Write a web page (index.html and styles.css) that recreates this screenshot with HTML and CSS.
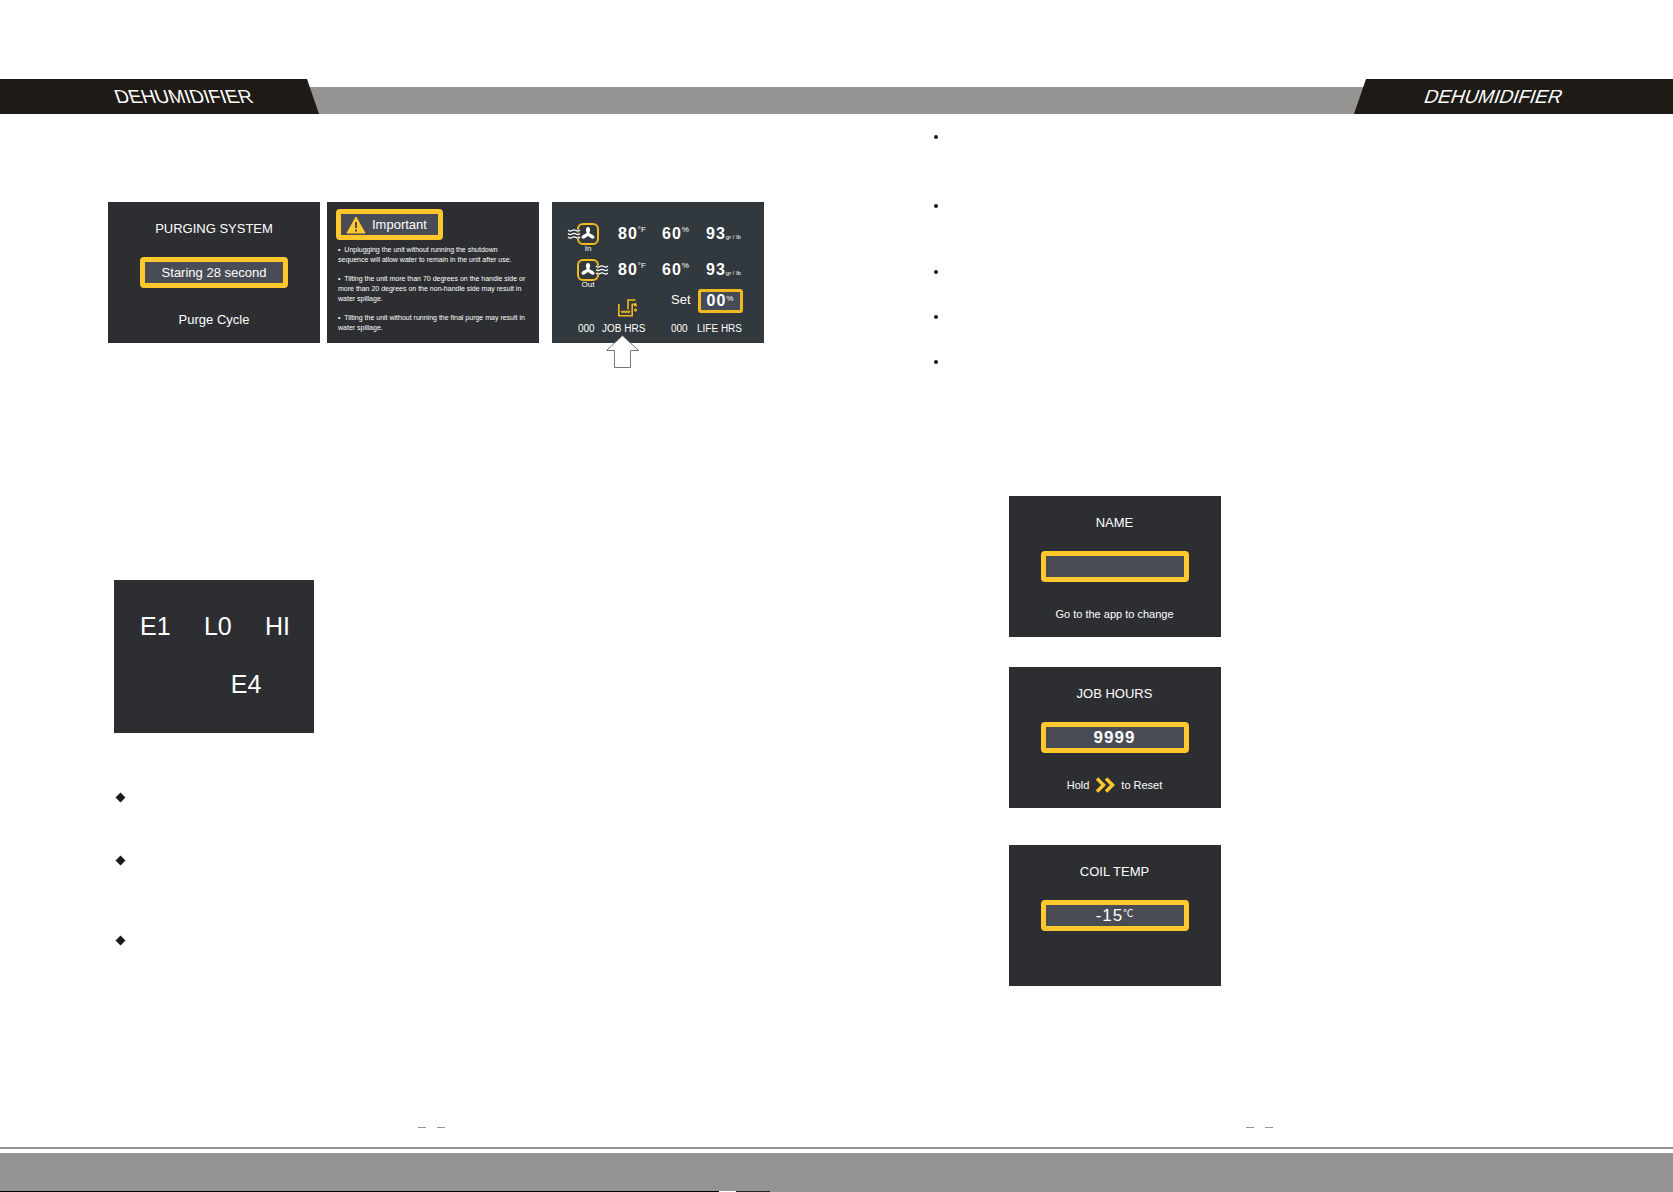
FILE: index.html

```html
<!DOCTYPE html>
<html lang="en">
<head>
<meta charset="utf-8">
<title>Dehumidifier</title>
<link rel="stylesheet" href="styles.css">
</head>
<body>
<svg class="defs" aria-hidden="true">
  <symbol id="fan" viewBox="0 0 22 22">
    <rect x="1" y="1" width="20" height="20" rx="5" fill="none" stroke="#f2b91f" stroke-width="2"/>
    <g fill="#fff">
      <path d="M11 12 C8.500 9 8 4.500 11 4 C14 4.500 13.500 9 11 12Z"/>
      <path d="M11 10.500 C14 10.500 18 12.500 17.500 14.800 C16 17 12 15 11 11Z"/>
      <path d="M11 10.500 C8 10.500 4 12.500 4.500 14.800 C6 17 10 15 11 11Z"/>
      <circle cx="11" cy="11.500" r="2"/>
    </g>
  </symbol>
  <symbol id="waves" viewBox="0 0 14 10">
    <g fill="none" stroke="#31383e" stroke-width="3">
      <path d="M1 1.500 Q3 3 5 1.800 T9 1.800 T13 1.500M1 5 Q3 6.500 5 5.300 T9 5.300 T13 5M1 8.500 Q3 10 5 8.800 T9 8.800 T13 8.500"/>
    </g>
    <g fill="none" stroke="#fff" stroke-width="1.300">
      <path d="M1 1 Q3 2.800 5 1.500 T9 1.500 T13 1M1 4.500 Q3 6.300 5 5 T9 5 T13 4.500M1 8 Q3 9.800 5 8.500 T9 8.500 T13 8"/>
    </g>
  </symbol>
</svg>

<header class="banner">
  <div class="tab tab-left">DEHUMIDIFIER</div>
  <div class="tab tab-right">DEHUMIDIFIER</div>
</header>

<main class="spread">
  <section class="page page-left">
    <div class="screens">
      <div class="screen">
        <h2 class="screen-title">PURGING SYSTEM</h2>
        <output class="frame">Staring 28 second</output>
        <p class="screen-note">Purge Cycle</p>
      </div>

      <div class="screen notice">
        <div class="frame frame-notice">
          <svg width="20" height="18" viewBox="0 0 20 18" aria-hidden="true">
            <path d="M10 1 L19 17 H1Z" fill="#ffc82d" stroke="#ffc82d" stroke-linejoin="round"/>
            <path d="M10 6v6M10 13.500v2" stroke="#4a4c55" stroke-width="2"/>
          </svg>
          Important
        </div>
        <p>•&nbsp; Unplugging the unit without running the shutdown<br>sequence will allow water to remain in the unit after use.</p>
        <p>•&nbsp; Tilting the unit more than 70 degrees on the handle side or<br>more than 20 degrees on the non-handle side may result in<br>water spillage.</p>
        <p>•&nbsp; Tilting the unit without running the final purge may result in<br>water spillage.</p>
      </div>

      <div class="screen status">
        <table class="readings">
          <tr>
            <th scope="row">
              <svg width="42" height="22" viewBox="0 0 42 22" aria-hidden="true"><use href="#fan" x="10" width="22" height="22"/><use href="#waves" x="0" y="6" width="14" height="10"/></svg>
              <span>In</span>
            </th>
            <td>80<sup>°F</sup></td><td>60<sup>%</sup></td><td>93<small>gr / lb</small></td>
          </tr>
          <tr>
            <th scope="row">
              <svg width="42" height="22" viewBox="0 0 42 22" aria-hidden="true"><use href="#fan" x="10" width="22" height="22"/><use href="#waves" x="28" y="6" width="14" height="10"/></svg>
              <span>Out</span>
            </th>
            <td>80<sup>°F</sup></td><td>60<sup>%</sup></td><td>93<small>gr / lb</small></td>
          </tr>
        </table>
        <div class="setpoint">
          <svg class="tank" width="20" height="18" viewBox="0 0 20 18" aria-hidden="true">
            <g fill="none" stroke="#f2b91f" stroke-width="1.600">
              <path d="M.800 5V16.800H14.200V5.200H17"/>
              <path d="M17.500 1H10V10.500"/>
              <path d="M3 12l1.500 1.500 1.500-1.300 1.500 1.300 1.500-1.300 1.500 1.300 1.500-1.300"/>
            </g>
            <path d="M17.500 3.500l1.600 2.500q0 1.500-1.600 1.500t-1.600-1.500zM17.500 9l1.600 2q0 1.500-1.600 1.500t-1.600-1.500z" fill="#f2b91f"/>
          </svg>
          <span>Set</span>
          <output class="frame frame-set">00<sup>%</sup></output>
        </div>
        <div class="hours">
          <span>000</span><span>JOB HRS</span><span>000</span><span>LIFE HRS</span>
        </div>
        <svg class="pointer" width="33" height="34" viewBox="0 0 33 34" aria-hidden="true">
          <path d="M16.500 .700 L32.500 15.500H24.500V32.500H8.500V15.500H.500Z" fill="#fff" stroke="#77777a"/>
        </svg>
      </div>
    </div>

    <div class="codes">
      <div class="code-row"><span>E1</span><span>L0</span><span>HI</span></div>
      <div class="code-row"><span>E4</span></div>
    </div>

    <ul class="diamonds"><li></li><li></li><li></li></ul>
  </section>

  <section class="page page-right">
    <ul class="dots"><li></li><li></li><li></li><li></li><li></li></ul>
    <div class="stack">
      <div class="screen">
        <label class="screen-title" for="unit-name">NAME</label>
        <input class="frame" id="unit-name" type="text" readonly>
        <p class="screen-note note-small">Go to the app to change</p>
      </div>
      <div class="screen">
        <h2 class="screen-title">JOB HOURS</h2>
        <output class="frame value strong">9999</output>
        <p class="screen-note note-small">Hold
          <svg width="20" height="16" viewBox="0 0 20 16" aria-hidden="true"><path d="M2 1.500l6.500 6.500L2 14.500M11 1.500l6.500 6.500-6.500 6.500" fill="none" stroke="#ffc82d" stroke-width="3.500"/></svg>
          to Reset</p>
      </div>
      <div class="screen">
        <h2 class="screen-title">COIL TEMP</h2>
        <output class="frame value">-15<sup>℃</sup></output>
      </div>
    </div>
  </section>
</main>

<footer class="footer">
  <div class="folios">
    <div class="folio folio-left"><i></i><i></i></div>
    <div class="folio folio-right"><i></i><i></i></div>
  </div>
  <div class="rule"></div>
  <div class="base"></div>
</footer>
</body>
</html>
```

FILE: styles.css

```css
* { box-sizing: border-box; }

body {
  margin: 0;
  min-height: 100vh;
  display: flex;
  flex-direction: column;
  background: #fff;
  color: #fff;
  font-family: "Liberation Sans", Arial, sans-serif;
  font-size: 13px;
  line-height: 16px;
}

h2, p, ul { margin: 0; padding: 0; font-weight: normal; font-size: inherit; }
ul { list-style: none; }
svg { display: block; flex: none; }
.defs { position: absolute; width: 0; height: 0; }

/* Banner with two slanted tabs */
.banner {
  display: flex;
  justify-content: space-between;
  margin-top: 79px;
  overflow: hidden;
  background: linear-gradient(#fff 8px, #969492 8px);
}
.tab {
  width: 333px;
  height: 35px;
  line-height: 35px;
  font-size: 19px;
  background: #1e1b16;
}
.tab-left { margin-left: -20px; padding-left: 135px; transform: skewX(19deg); }
.tab-right { margin-right: -20px; padding-left: 65px; transform: skewX(-19deg); }

/* Two-page spread */
.spread { flex: 1; display: grid; grid-template-columns: 1fr 1fr; }
.page-left { padding: 88px 0 0 108px; }
.page-right { padding: 15px 0 0 96px; }

.screens { display: flex; align-items: flex-start; gap: 7px; }
.screen {
  width: 212px;
  min-height: 141px;
  flex: none;
  display: flex;
  flex-direction: column;
  align-items: center;
  padding-top: 19px;
  background: #2d2e32;
}
.screen-title { margin-bottom: 20px; }
.screen-note { display: flex; align-items: center; gap: 6px; height: 16px; margin-top: 24px; }
.note-small { font-size: 11px; }

.frame {
  display: flex;
  align-items: center;
  justify-content: center;
  width: 148px;
  height: 31px;
  border: 5px solid #ffc82d;
  border-radius: 4px;
  background: #4a4c55;
  color: #fff;
}
.value { font-size: 17px; letter-spacing: 1px; }
.strong { font-weight: bold; }
sup {
  align-self: flex-start;
  font-size: 8px;
  line-height: 14px;
  font-weight: normal;
  font-family: "Liberation Sans", "Noto Sans CJK SC", sans-serif;
  letter-spacing: 0;
  vertical-align: top;
}
.value sup { font-size: 10px; line-height: 18px; }

/* Notice screen */
.notice {
  align-items: flex-start;
  gap: 9px;
  padding: 7px 0 0 11px;
  font-size: 7px;
  line-height: 10px;
  white-space: nowrap;
}
.frame-notice {
  justify-content: flex-start;
  width: 107px;
  gap: 6px;
  margin-left: -2px;
  margin-bottom: -4px;
  padding-left: 5px;
  font-size: 13px;
}

/* Status screen */
.status {
  position: relative;
  align-items: stretch;
  margin-left: 6px;
  padding: 21px 0 0 15px;
  background: #31383e;
}
.readings { border-collapse: collapse; table-layout: fixed; width: 183px; }
.readings th, .readings td { padding: 0; width: 44px; vertical-align: top; text-align: left; }
.readings th { width: 51px; font-size: 8px; font-weight: normal; line-height: 8px; }
.readings th span { display: block; width: 42px; text-align: center; }
.readings tr:first-child th { padding-bottom: 6px; }
.readings td { font-size: 16px; line-height: 22px; font-weight: bold; letter-spacing: 1px; white-space: nowrap; }
.readings small { font-size: 6px; font-weight: normal; letter-spacing: 0; }
.setpoint { display: flex; height: 28px; padding-left: 51px; line-height: 22px; }
.tank { align-self: flex-end; margin-right: 33px; }
.frame-set {
  width: 45px;
  height: 24px;
  margin-left: 7px;
  border: 3px solid #f2b91f;
  border-radius: 3px;
  background: #454b57;
  font-size: 16px;
  font-weight: bold;
  letter-spacing: 1px;
}
.hours {
  display: grid;
  grid-template-columns: 24px 69px 26px auto;
  padding-left: 11px;
  margin-top: 6px;
  font-size: 10px;
  line-height: 12px;
}
.pointer { position: absolute; left: 54px; top: 133px; }

/* Error codes */
.codes {
  width: 200px;
  height: 153px;
  margin: 237px 0 0 6px;
  padding: 31px 24px 0 26px;
  background: #2d2e32;
  font-size: 25px;
  line-height: 30px;
}
.code-row { display: flex; justify-content: space-between; }
.code-row + .code-row { justify-content: center; margin-top: 28px; padding-left: 62px; }

/* Marker lists */
.diamonds { display: grid; grid-template-rows: 63px 80px 20px; margin: 54px 0 0 9px; }
.diamonds li::before {
  content: "";
  display: block;
  width: 7px;
  height: 7px;
  margin-top: 7px;
  background: #1e1b16;
  transform: rotate(45deg);
}
.dots { display: grid; grid-template-rows: 69px 66px 45px 45px 16px; padding-left: 1px; }
.dots li::before {
  content: "";
  display: block;
  width: 4px;
  height: 4px;
  margin-top: 6px;
  border-radius: 50%;
  background: #1e1b16;
}
.stack {
  display: grid;
  grid-template-rows: 171px 178px auto;
  align-items: start;
  margin: 126px 0 40px 76px;
}

/* Footer */
.folios { display: grid; grid-template-columns: 1fr 1fr; margin-bottom: 19px; }
.folio { display: flex; justify-content: center; gap: 11px; }
.folio i { width: 8px; height: 1px; background: #969492; }
.folio-left { padding-left: 26px; }
.folio-right { padding-left: 10px; }
.rule { height: 2px; margin-bottom: 4px; background: #969492; }
.base { height: 39px; background: linear-gradient(90deg, #000 43%, #fff 43%, #fff 44%, #222 44%, #222 46%, #969492 46%) bottom / 100% 1px no-repeat #969492; }
```
